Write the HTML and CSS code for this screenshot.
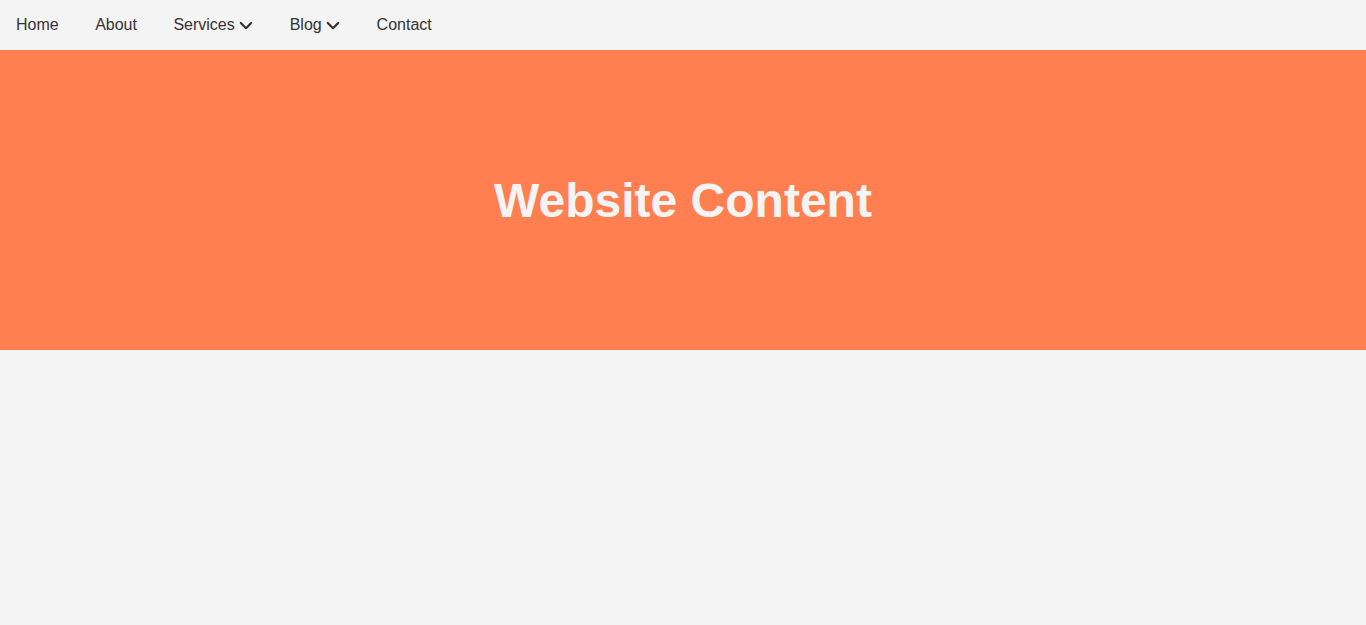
FILE: index.html
```html
<!DOCTYPE html>
<html>
<head>
<meta charset="utf-8">
<link rel="stylesheet" href="styles.css">
</head>
<body>
<nav class="nav">
<ul class="menu">
<li class="item"><a href="#">Home</a></li>
<li class="item"><a href="#">About</a></li>
<li class="item"><a href="#">Services <svg class="chev" viewBox="0 0 14 16" width="14" height="16"><path d="M1.8 5 L7 10.2 L12.2 5" fill="none" stroke="#333" stroke-width="2.2" stroke-linecap="round" stroke-linejoin="round"/></svg></a></li>
<li class="item"><a href="#">Blog <svg class="chev" viewBox="0 0 14 16" width="14" height="16"><path d="M1.8 5 L7 10.2 L12.2 5" fill="none" stroke="#333" stroke-width="2.2" stroke-linecap="round" stroke-linejoin="round"/></svg></a></li>
<li class="item"><a href="#">Contact</a></li>
</ul>
</nav>
<section class="hero">
<h1 class="title">Website Content</h1>
</section>
</body>
</html>
```
FILE: styles.css
```css
html, body {
  margin: 0;
  padding: 0;
  background: #f4f4f4;
  font-family: "Liberation Sans", Arial, sans-serif;
  color: #333;
}
.nav {
  height: 50px;
  background: #f4f4f4;
}
.menu {
  margin: 0;
  padding: 0;
  list-style: none;
  font-size: 16px;
  line-height: 50px;
}
.item {
  display: inline-block;
  padding: 0 16px;
}
.item a {
  color: #333;
  text-decoration: none;
}
.chev {
  vertical-align: -4px;
}
.hero {
  height: 300px;
  background: #ff7f50;
  display: flex;
  align-items: center;
  justify-content: center;
}
.title {
  margin: 0;
  color: #f4f4f4;
  font-size: 48px;
  font-weight: bold;
}
```
